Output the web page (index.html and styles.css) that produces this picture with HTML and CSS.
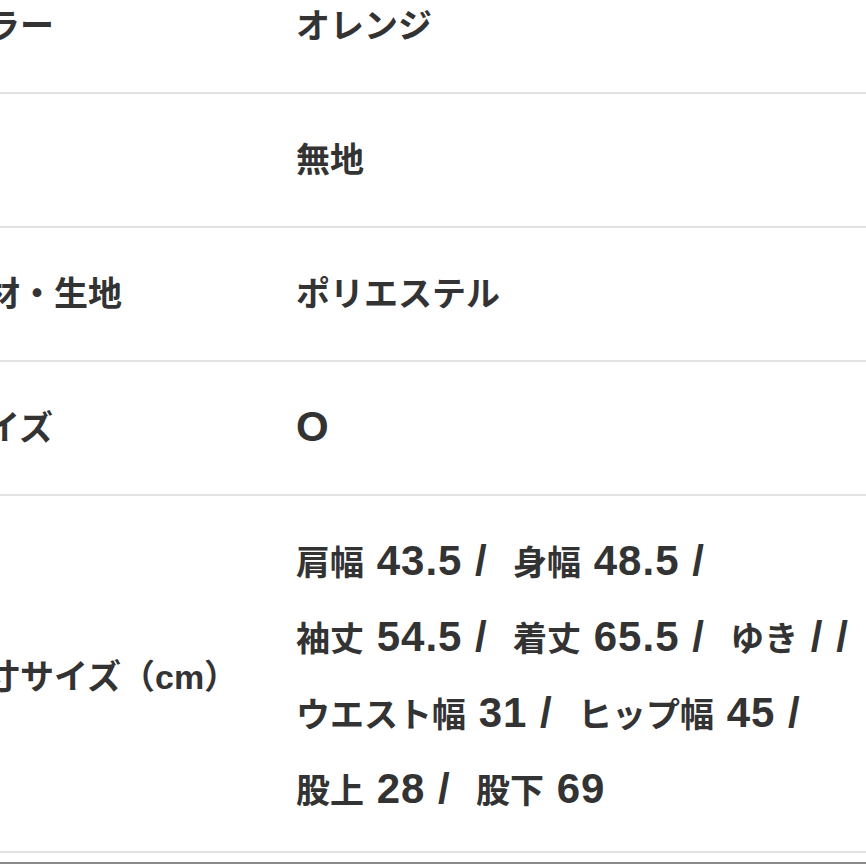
FILE: index.html
```html
<!DOCTYPE html>
<html lang="ja">
<head>
<meta charset="utf-8">
<link rel="stylesheet" href="styles.css">
</head>
<body>
<div class="spec">
  <div class="row">
    <div class="label">カラー</div>
    <div class="value">オレンジ</div>
  </div>
  <div class="row">
    <div class="label">柄</div>
    <div class="value">無地</div>
  </div>
  <div class="row">
    <div class="label">素材・生地</div>
    <div class="value">ポリエステル</div>
  </div>
  <div class="row">
    <div class="label">サイズ</div>
    <div class="value"><span class="num">O</span></div>
  </div>
  <div class="row row-tall">
    <div class="label label-tall">実寸サイズ（cm）</div>
    <div class="value lines">
      <div class="line">肩幅<span class="num"> 43.5 /  </span>身幅<span class="num"> 48.5 /</span></div>
      <div class="line">袖丈<span class="num"> 54.5 /  </span>着丈<span class="num"> 65.5 /  </span>ゆき<span class="num"> / /</span></div>
      <div class="line">ウエスト幅<span class="num"> 31 /  </span>ヒップ幅<span class="num"> 45 /</span></div>
      <div class="line">股上<span class="num"> 28 /  </span>股下<span class="num"> 69</span></div>
    </div>
  </div>
</div>
<div class="next"></div>
</body>
</html>
```

FILE: styles.css
```css
html, body {
  margin: 0;
  padding: 0;
  background: #ffffff;
  overflow: hidden;
}
body {
  width: 866px;
  height: 866px;
  font-family: "Liberation Sans", "Noto Sans CJK JP", sans-serif;
  font-weight: bold;
  font-size: 34px;
  color: #333333;
}
.spec {
  margin-top: -40px;
  margin-left: -48px;
  width: 914px;
}
.row {
  display: grid;
  grid-template-columns: 344px 1fr;
  align-items: center;
  height: 132px;
  border-bottom: 2px solid #e2e2e2;
}
.row-tall {
  height: 355px;
}
.label, .value {
  line-height: 40px;
  white-space: nowrap;
}
.label-tall {
  padding-top: 6px;
}
.num {
  font-family: "Liberation Sans", sans-serif;
  font-size: 42px;
  letter-spacing: 1px;
  white-space: pre;
}
.lines {
  padding-top: 4px;
}
.lines .line {
  line-height: 74px;
  white-space: pre;
}
.next {
  margin-top: 9px;
  border-top: 2px solid #8a8a8a;
}
```
